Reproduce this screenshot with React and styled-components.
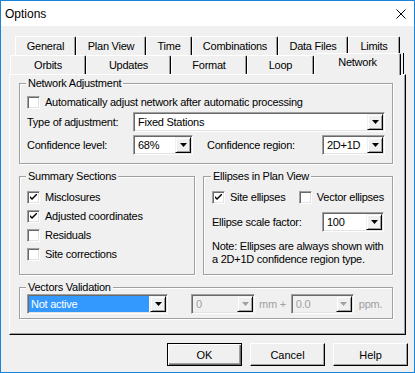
import React from 'react'
import styled, { createGlobalStyle } from 'styled-components'

const GlobalStyle = createGlobalStyle`
    html, body {
        margin: 0;
        padding: 0;
        background: #fff;
    }
    body {
        font-family: "Liberation Sans", Arial, sans-serif;
        font-size: 11px;
        letter-spacing: -0.25px;
        color: #000;
    }
    * {
        box-sizing: border-box;
    }
`;

const Window = styled.div`
    width: 415px;
    height: 373px;
    border: 1px solid #1883d7;
    background: #f0f0f0;
    display: flex;
    flex-direction: column;
`;

const TitleBar = styled.div`
    height: 25px;
    background: #fff;
    display: flex;
    align-items: center;
    justify-content: space-between;
    padding: 0 8px 0 4px;
`;

const Title = styled.span`
    font-size: 12px;
    letter-spacing: 0;
`;

const Client = styled.div`
    flex: 1;
    display: flex;
    flex-direction: column;
    padding-top: 10px;
`;

const TabRow = styled.div`
    display: flex;
    height: 19px;
    margin-left: ${p => p.$indent}px;
`;

const Tab = styled.div`
    width: ${p => p.$w}px;
    height: ${p => (p.$active ? 22 : 19)}px;
    margin-top: ${p => (p.$active ? -2 : 0)}px;
    position: relative;
    z-index: ${p => (p.$active ? 2 : 0)};
    background: #f0f0f0;
    border-top: 1px solid #fff;
    border-left: 1px solid #fff;
    border-right: 1px solid #000;
    box-shadow: inset -1px 0 0 #a0a0a0;
    border-radius: 2px 2px 0 0;
    display: flex;
    justify-content: center;
    padding-top: ${p => (p.$active ? 2 : 3)}px;
    line-height: 13px;
    white-space: nowrap;
`;

const TabEnd = styled.div`
    width: 3px;
    height: 21px;
    margin-top: -2px;
    border-right: 1px solid #000;
`;

const Panel = styled.div`
    width: 397px;
    height: 261px;
    margin-left: 8px;
    border-top: 1px solid #fff;
    border-left: 1px solid #fff;
    border-right: 1px solid #000;
    border-bottom: 1px solid #000;
    box-shadow: inset -1px -1px 0 #a0a0a0;
    padding: 8px 12px 0 9px;
    display: flex;
    flex-direction: column;
`;

const Group = styled.div`
    border: 1px solid #a0a0a0;
    box-shadow: 1px 1px 0 #fff, inset 1px 1px 0 #fff;
    padding: 0 ${p => p.$pad || 7}px ${p => p.$bottom || 8}px ${p => p.$pad || 7}px;
    margin-top: ${p => p.$top || 0}px;
    width: ${p => (p.$w ? `${p.$w}px` : 'auto')};
    display: flex;
    flex-direction: column;
`;

const Caption = styled.div`
    width: fit-content;
    margin: -7px 0 0 -1px;
    padding: 0 2px;
    height: 13px;
    line-height: 13px;
    background: #f0f0f0;
    white-space: nowrap;
`;

const Columns = styled.div`
    display: flex;
    gap: 8px;
    margin-top: 12px;
`;

const CheckRow = styled.div`
    display: flex;
    align-items: center;
    height: 13px;
    margin-top: ${p => p.$top || 0}px;
`;

const CheckItem = styled.label`
    display: flex;
    align-items: center;
    gap: 5px;
    width: ${p => (p.$w ? `${p.$w}px` : 'auto')};
    line-height: 13px;
    white-space: nowrap;
`;

const CheckStack = styled.div`
    display: flex;
    flex-direction: column;
    gap: 6px;
    margin-top: 8px;
`;

const Box = styled.span`
    width: 13px;
    height: 13px;
    flex: none;
    background: #fff;
    border: 1px solid;
    border-color: #a0a0a0 #fff #fff #a0a0a0;
    box-shadow: inset 1px 1px 0 #696969, inset -1px -1px 0 #e3e3e3;
    display: flex;
    align-items: center;
    justify-content: center;
`;

const FieldRow = styled.div`
    display: flex;
    align-items: center;
    height: 20px;
    margin-top: ${p => p.$top || 0}px;
`;

const Label = styled.span`
    width: ${p => (p.$w ? `${p.$w}px` : 'auto')};
    flex: ${p => (p.$fill ? 1 : 'none')};
    margin-left: ${p => p.$ml || 0}px;
    color: ${p => (p.$disabled ? '#a0a0a0' : '#000')};
    white-space: nowrap;
`;

const ComboBox = styled.div`
    width: ${p => (p.$w ? `${p.$w}px` : 'auto')};
    flex: ${p => (p.$w ? 'none' : 1)};
    height: 20px;
    margin-left: ${p => p.$ml || 0}px;
    border: 1px solid;
    border-color: #a0a0a0 #fff #fff #a0a0a0;
    box-shadow: inset 1px 1px 0 #696969, inset -1px -1px 0 #e3e3e3;
    background: ${p => (p.$disabled ? '#f0f0f0' : '#fff')};
    padding: 1px;
    display: flex;
`;

const ComboText = styled.div`
    flex: 1;
    line-height: 16px;
    padding-left: ${p => (p.$selected ? 2 : 3)}px;
    margin-right: 1px;
    white-space: nowrap;
    overflow: hidden;
    color: ${p => (p.$selected ? '#fff' : p.$disabled ? '#a0a0a0' : '#000')};
    background: ${p => (p.$selected ? '#3399ff' : 'transparent')};
`;

const ArrowButton = styled.div`
    width: 16px;
    height: 16px;
    flex: none;
    background: #f0f0f0;
    border: 1px solid;
    border-color: #f0f0f0 #000 #000 #f0f0f0;
    box-shadow: inset 1px 1px 0 #fff, inset -1px -1px 0 #a0a0a0;
    display: flex;
    align-items: center;
    justify-content: center;
`;

const Note = styled.p`
    margin: 8px 0 0;
    line-height: 13px;
    white-space: nowrap;
`;

const ButtonRow = styled.div`
    display: flex;
    justify-content: flex-end;
    gap: 8px;
    margin-top: 8px;
    padding-right: 6px;
`;

const Button = styled.button`
    width: 75px;
    height: 23px;
    padding: 0;
    font: inherit;
    color: #000;
    background: #f0f0f0;
    border: 1px solid;
    border-color: ${p => (p.$default ? '#000' : '#fff #000 #000 #fff')};
    box-shadow: ${p => (p.$default
        ? 'inset 1px 1px 0 #fff, inset -1px -1px 0 #696969, inset -2px -2px 0 #a0a0a0'
        : 'inset -1px -1px 0 #a0a0a0')};
`;

const Arrow = ({ disabled }) => (
    <svg width="7" height="4" viewBox="0 0 7 4">
        <polygon points="0,0 7,0 3.5,4" fill={disabled ? '#a0a0a0' : '#000'} />
    </svg>
)

const Combo = ({ value, w, ml, selected, disabled }) => (
    <ComboBox $w={w} $ml={ml} $disabled={disabled}>
        <ComboText $selected={selected} $disabled={disabled}>{value}</ComboText>
        <ArrowButton><Arrow disabled={disabled} /></ArrowButton>
    </ComboBox>
)

const Check = ({ checked, w, children }) => (
    <CheckItem $w={w}>
        <Box>
            {checked && (
                <svg width="7" height="7" viewBox="0 0 7 7">
                    <path d="M0 2 L0 4 L2 6 L7 1 L7 -1 L2 4 Z" fill="#000" />
                </svg>
            )}
        </Box>
        {children}
    </CheckItem>
)

const backTabs = [
    ['General', 61], ['Plan View', 70], ['Time', 46],
    ['Combinations', 86], ['Data Files', 70], ['Limits', 52],
]
const frontTabs = [
    ['Orbits', 76], ['Updates', 85], ['Format', 76], ['Loop', 67], ['Network', 87],
]

const App = () => {
    return (
        <Window>
            <GlobalStyle />
            <TitleBar>
                <Title>Options</Title>
                <svg width="10" height="10" viewBox="0 0 10 10">
                    <path d="M0.5 0.5 L9.5 9.5 M9.5 0.5 L0.5 9.5" stroke="#000" strokeWidth="1" />
                </svg>
            </TitleBar>
            <Client>
                <TabRow $indent={14}>
                    {backTabs.map(([name, w]) => <Tab key={name} $w={w}>{name}</Tab>)}
                </TabRow>
                <TabRow $indent={9}>
                    {frontTabs.map(([name, w]) => (
                        <Tab key={name} $w={w} $active={name === 'Network'}>{name}</Tab>
                    ))}
                    <TabEnd />
                </TabRow>
                <Panel>
                    <Group>
                        <Caption>Network Adjustment</Caption>
                        <CheckRow $top={6}>
                            <Check>Automatically adjust network after automatic processing</Check>
                        </CheckRow>
                        <FieldRow $top={3}>
                            <Label $w={106}>Type of adjustment:</Label>
                            <Combo value="Fixed Stations" />
                        </FieldRow>
                        <FieldRow $top={3}>
                            <Label $w={106}>Confidence level:</Label>
                            <Combo value="68%" w={60} />
                            <Label $fill $ml={14}>Confidence region:</Label>
                            <Combo value="2D+1D" w={63} />
                        </FieldRow>
                    </Group>
                    <Columns>
                        <Group $w={176}>
                            <Caption>Summary Sections</Caption>
                            <CheckStack>
                                <CheckRow><Check checked>Misclosures</Check></CheckRow>
                                <CheckRow><Check checked>Adjusted coordinates</Check></CheckRow>
                                <CheckRow><Check>Residuals</Check></CheckRow>
                                <CheckRow><Check>Site corrections</Check></CheckRow>
                            </CheckStack>
                        </Group>
                        <Group $w={190} $pad={8}>
                            <Caption>Ellipses in Plan View</Caption>
                            <CheckRow $top={8}>
                                <Check checked w={88}>Site ellipses</Check>
                                <Check>Vector ellipses</Check>
                            </CheckRow>
                            <FieldRow $top={8}>
                                <Label $fill>Ellipse scale factor:</Label>
                                <Combo value="100" w={62} />
                            </FieldRow>
                            <Note>
                                Note: Ellipses are always shown with<br />
                                a 2D+1D confidence region type.
                            </Note>
                        </Group>
                    </Columns>
                    <Group $top={12} $bottom={4}>
                        <Caption>Vectors Validation</Caption>
                        <FieldRow>
                            <Combo value="Not active" w={141} selected />
                            <Combo value="0" w={64} ml={23} disabled />
                            <Label $disabled $ml={4}>mm +</Label>
                            <Combo value="0.0" w={63} ml={5} disabled />
                            <Label $disabled $ml={5}>ppm.</Label>
                        </FieldRow>
                    </Group>
                </Panel>
                <ButtonRow>
                    <Button $default>OK</Button>
                    <Button>Cancel</Button>
                    <Button>Help</Button>
                </ButtonRow>
            </Client>
        </Window>
    )
}

export default App
